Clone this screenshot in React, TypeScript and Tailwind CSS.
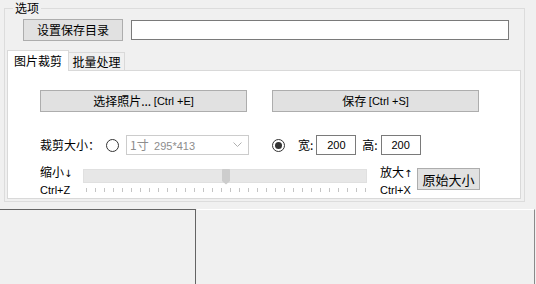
import React from 'react'

const btn =
  'flex items-center justify-center bg-[#e1e1e1] border border-[#adadad] text-[12px] leading-none text-black'

function Radio({ checked }: { checked?: boolean }) {
  return (
    <span className="flex items-center justify-center w-[13px] h-[13px] rounded-full border border-[#333] bg-white shrink-0">
      {checked && <span className="w-[7px] h-[7px] rounded-full bg-[#333]" />}
    </span>
  )
}

function Slider() {
  const ticks = Array.from({ length: 32 }, (_, i) => 3 + i * 9)
  return (
    <div className="relative w-[284px] mt-[6px]">
      <div className="h-[14px] bg-[#e7e7e7] border border-[#e0e0e0]" />
      <svg className="absolute left-[139px] top-0" width="8" height="16" viewBox="0 0 8 16">
        <path d="M1 0 H7 Q8 0 8 1 V12 L4 15.5 L0 12 V1 Q0 0 1 0 Z" fill="#cdcdcd" />
      </svg>
      <svg className="mt-[5px] block" width="284" height="4" viewBox="0 0 284 4">
        {ticks.map((x) => (
          <line key={x} x1={x + 0.5} y1="0" x2={x + 0.5} y2="4" stroke="#c4c4c4" strokeWidth="1" />
        ))}
      </svg>
    </div>
  )
}

const arrow = "font-['DejaVu_Sans',sans-serif] text-[10px]"
const latin = "font-['Liberation_Sans',sans-serif] text-[11px]"

export default function App() {
  return (
    <div className="w-[536px] h-[284px] bg-[#f0f0f0] overflow-hidden font-['Noto_Sans_CJK_SC','Noto_Sans',sans-serif] text-[12px] text-black">
      {/* 选项 group */}
      <div className="relative ml-[4px] mt-[8px] w-[521px] h-[194px] border border-[#dcdcdc]">
        <span className="absolute left-[8px] top-[-8px] bg-[#f0f0f0] px-[2px] leading-[14px]">选项</span>

        <div className="flex items-start gap-[8px] pl-[18px] pt-[10px]">
          <button className={`${btn} w-[100px] h-[22px]`}>设置保存目录</button>
          <div className="mt-[1px] w-[378px] h-[20px] bg-white border border-[#7a7a7a]" />
        </div>

        {/* tabs */}
        <div className="flex items-end h-[20px] mt-[9px] ml-[2px]">
          <div className="relative z-10 mb-[-1px] flex items-center justify-center w-[62px] h-[21px] bg-white border border-b-0 border-[#d9d9d9] leading-none">
            图片裁剪
          </div>
          <div className="flex items-center justify-center w-[56px] h-[18px] border border-l-0 border-b-0 border-[#d9d9d9] leading-none">
            批量处理
          </div>
        </div>

        <div className="ml-[2px] w-[514px] h-[129px] bg-white border border-[#d9d9d9]">
          <div className="flex gap-[25px] pl-[32px] pt-[19px]">
            <button className={`${btn} w-[207px] h-[22px]`}>
              选择照片...&nbsp;<span className={latin}>[Ctrl +E]</span>
            </button>
            <button className={`${btn} w-[207px] h-[22px]`}>
              保存&nbsp;<span className={latin}>[Ctrl +S]</span>
            </button>
          </div>

          <div className="flex items-center h-[20px] mt-[23px] pl-[32px] leading-none">
            <span className="w-[60px]">裁剪大小：</span>
            <span className="ml-[6px]">
              <Radio />
            </span>
            <div className="ml-[7px] flex items-center justify-between w-[123px] h-[20px] border border-[#cccccc] bg-white pl-[3px] pr-[6px] text-[#8d8d8d] text-[12px]">
              <span>
                1寸&nbsp;&nbsp;<span className={latin}>295*413</span>
              </span>
              <svg width="9" height="6" viewBox="0 0 9 6">
                <polyline points="0.5,0.5 4.5,4.5 8.5,0.5" fill="none" stroke="#b0b0b0" strokeWidth="1" />
              </svg>
            </div>
            <span className="ml-[23px]">
              <Radio checked />
            </span>
            <span className="ml-[13px]">宽:</span>
            <div className={`ml-[3px] flex items-center justify-center w-[40px] h-[20px] border border-[#7a7a7a] ${latin}`}>200</div>
            <span className="ml-[6px]">高:</span>
            <div className={`ml-[3px] flex items-center justify-center w-[40px] h-[20px] border border-[#7a7a7a] ${latin}`}>200</div>
          </div>

          <div className="flex items-start mt-[8px] pl-[32px]">
            <div className="w-[43px] flex flex-col leading-[17px]">
              <span>
                缩小<span className={arrow}>↓</span>
              </span>
              <span className={latin}>Ctrl+Z</span>
            </div>
            <Slider />
            <div className="ml-[13px] w-[37px] flex flex-col leading-[17px]">
              <span>
                放大<span className={arrow}>↑</span>
              </span>
              <span className={latin}>Ctrl+X</span>
            </div>
            <button className={`${btn} mt-[5px] w-[63px] h-[22px] text-[13px]`}>原始大小</button>
          </div>
        </div>
      </div>

      {/* bottom panes */}
      <div className="flex gap-[1px] mt-[7px] h-[80px]">
        <div className="w-[196px] border-t border-r border-[#646464]" />
        <div className="w-[338px] border-t border-t-white border-r border-r-[#8a8a8a]" />
      </div>
    </div>
  )
}
